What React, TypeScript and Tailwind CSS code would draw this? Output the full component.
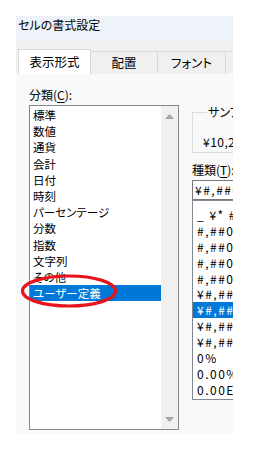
import React from "react";

const leftItems = [
  "標準",
  "数値",
  "通貨",
  "会計",
  "日付",
  "時刻",
  "パーセンテージ",
  "分数",
  "指数",
  "文字列",
  "その他",
  "ユーザー定義",
];

const rightItems = [
  "_ ¥* #,##0_ ;_ ¥* -#,##0_ ",
  "#,##0;-#,##0",
  "#,##0;[赤]-#,##0",
  "#,##0.00;-#,##0.00",
  "#,##0.00;[赤]-#,##0.00",
  "¥#,##0;¥-#,##0",
  "¥#,##0;[赤]¥-#,##0",
  "¥#,##0.00;¥-#,##0.00",
  "¥#,##0.00;[赤]¥-#,##0.00",
  "0%",
  "0.00%",
  "0.00E+00",
];

export default function App() {
  return (
    <div
      className="relative w-[255px] h-[457px] bg-white pl-4 pt-4 text-black [font-feature-settings:'palt']"
      style={{ fontFamily: '"Noto Sans CJK JP", "Noto Sans", sans-serif' }}
    >
      <div className="w-[217px] h-[417px] flex flex-col overflow-hidden">
        {/* title bar */}
        <div className="h-[24px] shrink-0 bg-[#eef3f9] pl-[2px] pt-[1px] text-[12px] leading-[16px] whitespace-nowrap">
          セルの書式設定
        </div>
        {/* tabs */}
        <div className="h-[34px] shrink-0 bg-[#f0f0f0] flex items-end pl-[2px] text-[12.5px] whitespace-nowrap">
          <div className="w-[73px] h-[25px] shrink-0 bg-white border border-b-0 border-[#d9d9d9] flex items-center justify-center">
            表示形式
          </div>
          <div className="w-[67px] h-[23px] shrink-0 bg-[#f0f0f0] border-t border-r border-[#d9d9d9] flex items-center justify-center">
            配置
          </div>
          <div className="w-[68px] h-[23px] shrink-0 bg-[#f0f0f0] border-t border-r border-[#d9d9d9] flex items-center justify-center">
            フォント
          </div>
          <div className="w-[60px] h-[23px] shrink-0 bg-[#f0f0f0] border-t border-[#d9d9d9]" />
        </div>
        {/* content */}
        <div className="flex-1 bg-[#f9f9f9] pl-[13px] flex gap-[13px] overflow-hidden">
          {/* left column */}
          <div className="w-[150px] shrink-0 pt-[13px] flex flex-col">
            <div className="h-[16px] text-[12px] leading-[16px]">
              分類(<span className="underline underline-offset-2">C</span>):
            </div>
            <div className="mt-[2px] h-[325px] border border-[#828790] bg-white flex">
              <div className="flex-1 pt-[1px] text-[11.5px]">
                {leftItems.map((it, i) => (
                  <div
                    key={it}
                    className={
                      i === leftItems.length - 1
                        ? "h-[16.2px] leading-[16.2px] pl-[3px] bg-[#0078d7] text-white whitespace-nowrap"
                        : "h-[16.2px] leading-[16.2px] pl-[3px] whitespace-nowrap"
                    }
                  >
                    {it}
                  </div>
                ))}
              </div>
              <div className="w-[17px] bg-[#f0f0f0] flex flex-col justify-between items-center pt-[8px] pb-[7px]">
                <svg width="9" height="5" viewBox="0 0 9 5">
                  <polygon points="0,5 9,5 4.5,0" fill="#a3a3a3" />
                </svg>
                <svg width="9" height="5" viewBox="0 0 9 5">
                  <polygon points="0,0 9,0 4.5,5" fill="#a3a3a3" />
                </svg>
              </div>
            </div>
          </div>
          {/* right column */}
          <div className="w-[130px] shrink-0 pt-[30px] flex flex-col">
            <fieldset className="border border-[#dcdcdc] pl-[10px] pb-[2px]">
              <legend className="ml-[4px] px-[1px] text-[12px] leading-[16px] whitespace-nowrap">
                サンプル
              </legend>
              <div className="mt-[14px] h-[16px] text-[12px] leading-[16px] tracking-[0.5px] whitespace-nowrap">
                ¥10,250
              </div>
            </fieldset>
            <div className="mt-[9px] h-[16px] text-[12px] leading-[16px] whitespace-nowrap">
              種類(<span className="underline underline-offset-2">T</span>):
            </div>
            <div className="mt-[2px] h-[20px] border border-[#7a7a7a] bg-white pl-[2px] text-[12px] leading-[18px] tracking-[1.5px] whitespace-nowrap">
              ¥#,##0;[赤]¥-#,##0
            </div>
            <div className="h-[200px] border border-[#828790] bg-white pt-[6px] text-[12px] tracking-[1.5px]">
              {rightItems.map((it, i) => (
                <div
                  key={it}
                  className={
                    i === 6
                      ? "h-[15.9px] leading-[15.9px] pl-[4px] bg-[#0078d7] text-white whitespace-nowrap"
                      : "h-[15.9px] leading-[15.9px] pl-[4px] whitespace-nowrap"
                  }
                >
                  {it}
                </div>
              ))}
            </div>
          </div>
        </div>
      </div>
      {/* red highlight ellipse */}
      <svg
        className="absolute left-0 top-0 pointer-events-none"
        width="255"
        height="457"
        viewBox="0 0 255 457"
      >
        <ellipse cx="69" cy="291" rx="46.5" ry="15" fill="none" stroke="#e8141c" strokeWidth="3.2" />
      </svg>
    </div>
  );
}
